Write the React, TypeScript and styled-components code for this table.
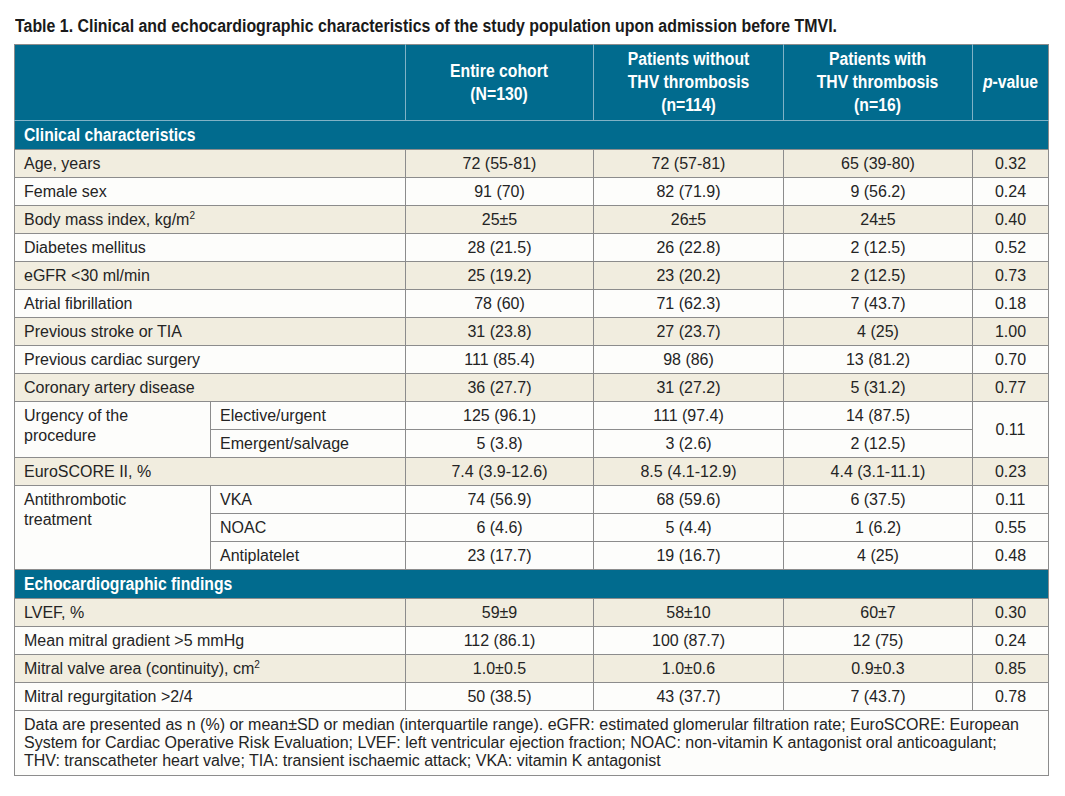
import React from "react";
import styled, { createGlobalStyle } from "styled-components";

const Global = createGlobalStyle`
  html, body { margin: 0; padding: 0; background: #ffffff; }
  body { font-family: "Liberation Sans", Arial, sans-serif; }
`;

const Page = styled.div`
  padding: 15px 17px 0 14px;
  width: 1034px;
`;

/* Condensed bold lettering (the reference uses a condensed grotesque) */
const Cond = styled.span<{ $origin?: string; $scale?: number }>`
  display: inline-block;
  white-space: nowrap;
  font-family: "Liberation Sans", Arial, sans-serif;
  font-weight: 700;
  transform: scaleX(${(p) => p.$scale ?? 0.875});
  transform-origin: ${(p) => p.$origin ?? "center"};
`;

const Title = styled.h1`
  margin: 0 0 7px 1px;
  font-size: 18px;
  line-height: 22px;
  font-weight: 700;
  color: #1a1a1a;
`;

const Table = styled.table`
  width: 1034px;
  border-collapse: collapse;
  table-layout: fixed;
  border: 1px solid #8c8c8c;
  font-size: 16px;
  color: #242424;
`;

const HeadCell = styled.th`
  background: #016b8e;
  color: #ffffff;
  font-weight: 700;
  font-size: 18px;
  line-height: 23px;
  text-align: center;
  vertical-align: middle;
  height: 75px;
  padding: 0;
  white-space: nowrap;
  border: 1px solid #80b2c6;
  border-top-color: #8c8c8c;
  &:first-child { border-left-color: #8c8c8c; }
  &:last-child { border-right-color: #8c8c8c; }
`;

const Ital = styled.i`
  font-style: italic;
`;

const SectionCell = styled.td`
  background: #016b8e;
  color: #ffffff;
  font-size: 18px;
  line-height: 22px;
  height: 28px;
  padding: 0 9px;
  text-align: left;
  border-top: 1px solid #80b2c6;
  border-left: 1px solid #8c8c8c;
  border-right: 1px solid #8c8c8c;
`;

const Row = styled.tr<{ $shade: "beige" | "white" }>`
  height: 28px;
  background: ${(p) => (p.$shade === "beige" ? "#f1eddf" : "#fdfdfb")};
`;

const Label = styled.td`
  padding: 0 9px;
  text-align: left;
  vertical-align: middle;
  line-height: 19px;
  border: 1px solid #8c8c8c;
  white-space: nowrap;
`;

const GroupLabel = styled(Label)`
  vertical-align: top;
  line-height: 20px;
  padding-top: 4px;
  background: #fdfdfb;
`;

const Value = styled.td`
  text-align: center;
  vertical-align: middle;
  padding: 0 4px;
  border: 1px solid #8c8c8c;
  white-space: nowrap;
`;

const Sup = styled.sup`
  font-size: 10px;
  line-height: 0;
  vertical-align: 6px;
`;

const NoteCell = styled.td`
  padding: 5px 9px 5px 9px;
  line-height: 18px;
  font-size: 16px;
  border: 1px solid #8c8c8c;
  background: #fdfdfb;
  color: #242424;
  white-space: nowrap;
`;

type Simple = { label: React.ReactNode; v: [string, string, string, string] };

const clinical: Simple[] = [
  { label: "Age, years", v: ["72 (55-81)", "72 (57-81)", "65 (39-80)", "0.32"] },
  { label: "Female sex", v: ["91 (70)", "82 (71.9)", "9 (56.2)", "0.24"] },
  { label: <>Body mass index, kg/m<Sup>2</Sup></>, v: ["25±5", "26±5", "24±5", "0.40"] },
  { label: "Diabetes mellitus", v: ["28 (21.5)", "26 (22.8)", "2 (12.5)", "0.52"] },
  { label: "eGFR <30 ml/min", v: ["25 (19.2)", "23 (20.2)", "2 (12.5)", "0.73"] },
  { label: "Atrial fibrillation", v: ["78 (60)", "71 (62.3)", "7 (43.7)", "0.18"] },
  { label: "Previous stroke or TIA", v: ["31 (23.8)", "27 (23.7)", "4 (25)", "1.00"] },
  { label: "Previous cardiac surgery", v: ["111 (85.4)", "98 (86)", "13 (81.2)", "0.70"] },
  { label: "Coronary artery disease", v: ["36 (27.7)", "31 (27.2)", "5 (31.2)", "0.77"] },
];

const echo: Simple[] = [
  { label: "LVEF, %", v: ["59±9", "58±10", "60±7", "0.30"] },
  { label: "Mean mitral gradient >5 mmHg", v: ["112 (86.1)", "100 (87.7)", "12 (75)", "0.24"] },
  { label: <>Mitral valve area (continuity), cm<Sup>2</Sup></>, v: ["1.0±0.5", "1.0±0.6", "0.9±0.3", "0.85"] },
  { label: "Mitral regurgitation >2/4", v: ["50 (38.5)", "43 (37.7)", "7 (43.7)", "0.78"] },
];

const SimpleRow = ({ r, shade }: { r: Simple; shade: "beige" | "white" }) => (
  <Row $shade={shade}>
    <Label colSpan={2}>{r.label}</Label>
    {r.v.map((x, i) => (
      <Value key={i}>{x}</Value>
    ))}
  </Row>
);

export default function App() {
  return (
    <>
      <Global />
      <Page>
        <Title>
          <Cond $origin="left" $scale={0.884}>
            Table 1. Clinical and echocardiographic characteristics of the study population upon admission before TMVI.
          </Cond>
        </Title>
        <Table>
          <colgroup>
            <col style={{ width: 196 }} />
            <col style={{ width: 195 }} />
            <col style={{ width: 188 }} />
            <col style={{ width: 190 }} />
            <col style={{ width: 189 }} />
            <col style={{ width: 76 }} />
          </colgroup>
          <thead>
            <tr>
              <HeadCell colSpan={2}></HeadCell>
              <HeadCell><Cond>Entire cohort<br />(N=130)</Cond></HeadCell>
              <HeadCell><Cond>Patients without<br />THV thrombosis<br />(n=114)</Cond></HeadCell>
              <HeadCell><Cond>Patients with<br />THV thrombosis<br />(n=16)</Cond></HeadCell>
              <HeadCell><Cond><Ital>p</Ital>-value</Cond></HeadCell>
            </tr>
          </thead>
          <tbody>
            <tr>
              <SectionCell colSpan={6}><Cond $origin="left">Clinical characteristics</Cond></SectionCell>
            </tr>
            {clinical.map((r, i) => (
              <SimpleRow key={i} r={r} shade={i % 2 === 0 ? "beige" : "white"} />
            ))}
            <Row $shade="white">
              <GroupLabel rowSpan={2}>Urgency of the<br />procedure</GroupLabel>
              <Label>Elective/urgent</Label>
              <Value>125 (96.1)</Value>
              <Value>111 (97.4)</Value>
              <Value>14 (87.5)</Value>
              <Value rowSpan={2}>0.11</Value>
            </Row>
            <Row $shade="white">
              <Label>Emergent/salvage</Label>
              <Value>5 (3.8)</Value>
              <Value>3 (2.6)</Value>
              <Value>2 (12.5)</Value>
            </Row>
            <SimpleRow r={{ label: "EuroSCORE II, %", v: ["7.4 (3.9-12.6)", "8.5 (4.1-12.9)", "4.4 (3.1-11.1)", "0.23"] }} shade="beige" />
            <Row $shade="white">
              <GroupLabel rowSpan={3}>Antithrombotic<br />treatment</GroupLabel>
              <Label>VKA</Label>
              <Value>74 (56.9)</Value>
              <Value>68 (59.6)</Value>
              <Value>6 (37.5)</Value>
              <Value>0.11</Value>
            </Row>
            <Row $shade="white">
              <Label>NOAC</Label>
              <Value>6 (4.6)</Value>
              <Value>5 (4.4)</Value>
              <Value>1 (6.2)</Value>
              <Value>0.55</Value>
            </Row>
            <Row $shade="white">
              <Label>Antiplatelet</Label>
              <Value>23 (17.7)</Value>
              <Value>19 (16.7)</Value>
              <Value>4 (25)</Value>
              <Value>0.48</Value>
            </Row>
            <tr>
              <SectionCell colSpan={6}><Cond $origin="left">Echocardiographic findings</Cond></SectionCell>
            </tr>
            {echo.map((r, i) => (
              <SimpleRow key={i} r={r} shade={i % 2 === 0 ? "beige" : "white"} />
            ))}
            <tr>
              <NoteCell colSpan={6}>
                Data are presented as n (%) or mean±SD or median (interquartile range). eGFR: estimated glomerular filtration rate; EuroSCORE: European
                <br />
                System for Cardiac Operative Risk Evaluation; LVEF: left ventricular ejection fraction; NOAC: non-vitamin K antagonist oral anticoagulant;
                <br />
                THV: transcatheter heart valve; TIA: transient ischaemic attack; VKA: vitamin K antagonist
              </NoteCell>
            </tr>
          </tbody>
        </Table>
      </Page>
    </>
  );
}
